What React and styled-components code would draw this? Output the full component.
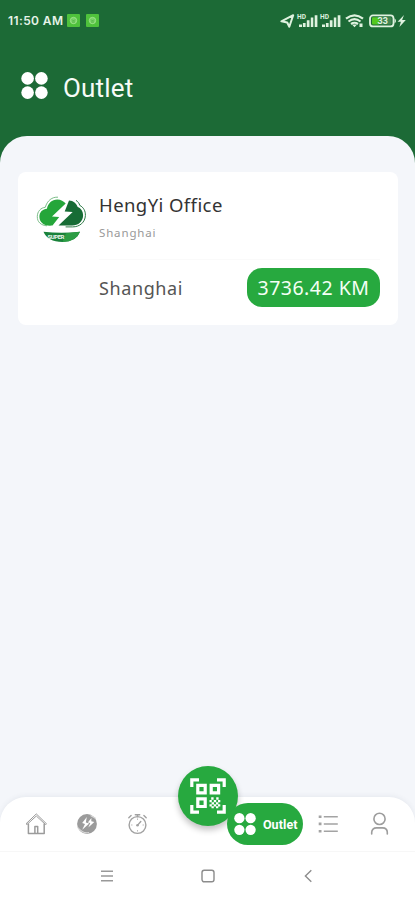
import React from 'react';
import styled, { createGlobalStyle } from 'styled-components';

const App = () => {
  return (
    <>
      <GlobalStyle />
      <Screen>
        <StatusBar>
          <Time>11:50 AM</Time>
          <AppBadge />
          <AppBadge />
          <StatusIcons />
        </StatusBar>

        <Header>
          <Dots size={27} />
          <Title>Outlet</Title>
        </Header>

        <Content>
          <Card>
            <Logo />
            <Details>
              <Name>HengYi Office</Name>
              <Area>Shanghai</Area>
              <Row>
                <City>Shanghai</City>
                <Distance>3736.42 KM</Distance>
              </Row>
            </Details>
          </Card>
        </Content>

        <TabBar>
          <Tab><HomeIcon /></Tab>
          <Tab><ChargeIcon /></Tab>
          <Tab><TimerIcon /></Tab>
          <ScanSlot>
            <ScanButton><QrIcon /></ScanButton>
          </ScanSlot>
          <ActiveTab>
            <Dots size={22} />
            <span>Outlet</span>
          </ActiveTab>
          <Tab><ListIcon /></Tab>
          <Tab><UserIcon /></Tab>
        </TabBar>

        <SystemNav>
          <svg width="14" height="14" viewBox="0 0 14 14" fill="none" stroke="#999" strokeWidth="1.4">
            <path d="M1 2.3h12M1 7h12M1 11.7h12" />
          </svg>
          <svg width="14" height="14" viewBox="0 0 14 14" fill="none" stroke="#8c8c8c" strokeWidth="1.4">
            <rect x="1" y="1.2" width="12" height="11.6" rx="2.2" />
          </svg>
          <svg width="14" height="14" viewBox="0 0 14 14" fill="none" stroke="#8c8c8c" strokeWidth="1.4">
            <path d="M10.3 1.3 4.4 7l5.9 5.7" />
          </svg>
        </SystemNav>
      </Screen>
    </>
  );
};

export default App;

const Dots = ({ size }) => (
  <svg width={size} height={size} viewBox="0 0 27 27" fill="#fff">
    <circle cx="6.6" cy="6.4" r="6.3" />
    <circle cx="20.4" cy="6.4" r="6.3" />
    <circle cx="6.6" cy="20.6" r="6.3" />
    <circle cx="20.4" cy="20.6" r="6.3" />
  </svg>
);

const AppBadge = () => (
  <Badge viewBox="0 0 13 13">
    <rect width="13" height="13" rx="1" fill="#4fc23c" />
    <circle cx="6.5" cy="6.5" r="3.2" fill="#7bd66a" stroke="#a4e592" strokeWidth="0.8" />
    <path d="M5 5.5 6.5 7 8 5.5M5 8h3" fill="none" stroke="#4cab40" strokeWidth="0.8" />
  </Badge>
);

const Signal = ({ x }) => (
  <g transform={`translate(${x} 0)`}>
    <text x="-1.5" y="5.2" fontSize="6.6" fontWeight="700">HD</text>
    <path d="M.5 10.4h3V13h-3zM4.4 8.9h2.7V13H4.4zM8.3 6.3H11V13H8.3zM12.3 3.6h2.5V13h-2.5zM16.2 1.2h2.7V13h-2.7z" />
  </g>
);

const StatusIcons = () => (
  <StatusSvg width="127" height="14" viewBox="0 0 127 14" fill="#dff2df">
    <path d="M1.4 7.3 13.2 1.2 9.3 12.7 7.2 8.5z" fill="none" stroke="#dff2df" strokeWidth="2" strokeLinejoin="round" />
    <Signal x={18.5} />
    <Signal x={41.5} />
    <g fill="none" stroke="#dff2df" strokeWidth="2.2">
      <path d="M66 4.6q8.5-6.6 17 0M68.5 7.5q6-4.6 12 0" />
      <path d="M71 10q3.5-2.5 7 0" />
    </g>
    <path d="m72 10.5 2.5 2.7 2.5-2.7zM79.5 9.5h3V13h-3z" />
    <rect x="90" y="1.4" width="23.5" height="11" rx="3" fill="none" stroke="#dff2df" strokeWidth="1.8" />
    <path d="M114.5 4.2q3 2.7 0 5.4z" />
    <rect x="92" y="3.3" width="7.5" height="7.2" rx="1" fill="#54c820" />
    <rect x="99.5" y="3.3" width="12" height="7.2" rx="1" fill="#438552" />
    <text x="97.5" y="10.2" fontSize="9" fontWeight="700">33</text>
    <path d="m124 1-6.4 6.8h3.3l-1.5 5.2 6.4-7h-3.7z" />
  </StatusSvg>
);

const Logo = () => (
  <LogoSvg width="52" height="49" viewBox="0 0 52 49">
    <path
      d="M11 30.8C5 30.4 1.2 27 1.3 21.7c0-5.4 3.6-9 8-9.4C11.2 5.6 16 1.8 22 2.2"
      fill="none" stroke="#6db57c" strokeWidth="0.9"
    />
    <path d="M16.5 30.5C8 31.5 3.4 27.4 3.4 21.8c0-4.8 3.4-7.6 7.5-8C12 8 16 4.4 21.2 4.4c3.6 0 6.6 1.6 8.5 4.2L16 21.6l7.2.4z" fill="#25a63a" />
    <path d="M33 5.4c4.4 0 7.5 3 8.7 6.5 3.4 1.4 5.5 4.6 5.4 8.6-.2 6-4.7 10-11 10H22.5l14.2-13.6-8-.5z" fill="#176c35" />
    <path d="M40 5.4c2 1.1 3.2 3 3.8 5 3.6 1.9 5.8 5.4 5.6 10.2-.4 6.7-5.6 11.3-12.8 11.3h-7" fill="none" stroke="#2e7b47" strokeWidth="1" />
    <path d="M7.5 36.8q18 2.1 36.5 0-3.5 10-17.5 10.2Q11.5 46.8 7.5 36.8z" fill="#19823a" />
    <path d="M30 38.3 44 36.8q-3.5 10-17.5 10.2z" fill="#2c9d44" />
    <text x="11.5" y="43.6" fontSize="6" fontWeight="800" textLength="17">SUPER</text>
  </LogoSvg>
);

const HomeIcon = () => (
  <svg width="24" height="24" viewBox="0 0 24 24" fill="none" stroke="#9b9b9b" strokeWidth="1.5" strokeLinejoin="round">
    <path d="M4.4 11.5v10h15.8v-10" />
    <path d="m2 11.8 10.3-9.9 10.2 9.9-1 .7-9.2-8.5L3 12.5z" strokeWidth="1" />
    <path d="M10.9 21.4v-6.8h2.8v6.8" />
  </svg>
);

const ChargeIcon = () => (
  <svg width="24" height="24" viewBox="0 0 24 24">
    <circle cx="12" cy="12" r="9.9" fill="#9b9b9b" />
    <path d="M11.8 5 7.2 11l2.8.9-2.8 5.9 7-6.4-3.4-.8z" fill="#fff" />
    <path d="m16.4 6-3.6 4.4 2.5.6-2 4.6 6-5.6-3-.8z" fill="#fff" />
    <path d="M2.8 15.5Q8 22 14 20.5M15.5 3.4l5.4 3.2" fill="none" stroke="#d8d8d8" strokeWidth="1.2" />
  </svg>
);

const TimerIcon = () => (
  <svg width="24" height="24" viewBox="0 0 24 24" fill="none" stroke="#a1a1a1" strokeWidth="1.4" strokeLinecap="round">
    <circle cx="12.5" cy="13" r="8.4" />
    <path d="M10.3 2.8h4.4M12.5 3v1.7M3.8 5.7l2.3-2.3M21.2 5.7l-2.3-2.3M12.6 13.1l3.2-3.6" />
    <circle cx="12.5" cy="13.3" r="1.3" fill="#a1a1a1" stroke="none" />
    <path d="M12.5 6.8v.8M6.3 13h.8M17.9 13h.8M12.5 18.4v.8" strokeWidth="0.7" />
  </svg>
);

const QrIcon = () => (
  <svg width="36" height="36" viewBox="0 0 36 36">
    <g fill="none" stroke="#fff" strokeWidth="3.2">
      <path d="M1.8 9V1.8H9M27 1.8h7.2V9M1.8 27v7.2H9M27 34.2h7.2V27" />
      <path d="M7.8 7.3h7.4v7.6H7.8zM21.2 7.3h7.4v7.6h-7.4zM7.8 20.9h7.4v7.6H7.8z" />
    </g>
    <path
      d="M21.2 19.3h2.4v2.4h-2.4zM26.2 19.3h2.4v2.4h-2.4zM19.5 22h2.3v2.3h-2.3zM23.8 22h2.4v2.3h-2.4zM28 22h2.3v2.3H28zM21.6 24.3h2.4v2.3h-2.4zM26 24.3h2.3v2.3H26zM19.5 26.3h2.3v2.3h-2.3zM23.8 26.3h2.4v2.3h-2.4zM28 26.3h2.3v2.3H28zM21.5 28.2h2.3v2h-2.3zM26 28.2h2.3v2H26z"
      fill="#fff"
    />
  </svg>
);

const ListIcon = () => (
  <svg width="24" height="24" viewBox="0 0 24 24" fill="none" stroke="#a3a3a3">
    <path d="M7.8 4.7H21.8M7.8 11.9H21.8M7.8 19.2H21.8" strokeWidth="1.5" />
    <path d="M2.7 4.7h2.8M2.7 11.9h2.8M2.7 19.2h2.8" strokeWidth="2.6" />
  </svg>
);

const UserIcon = () => (
  <svg width="24" height="24" viewBox="0 0 24 24" fill="none" stroke="#9d9d9d" strokeWidth="1.6" strokeLinecap="round">
    <circle cx="12.5" cy="6.9" r="5.6" />
    <path d="M4.7 22v-1.4c0-2.9 2-4.7 4.8-4.7h6c2.8 0 4.8 1.8 4.8 4.7V22" />
  </svg>
);

const GlobalStyle = createGlobalStyle`
  * {
    box-sizing: border-box;
  }
  body {
    margin: 0;
    font-family: 'Noto Sans', sans-serif;
  }
  svg {
    display: block;
    flex-shrink: 0;
  }
`;

const Screen = styled.div`
  width: 415px;
  height: 900px;
  display: flex;
  flex-direction: column;
  overflow: hidden;
  background: linear-gradient(#1c6a36 50%, #f4f6fa 50%);
`;

const StatusBar = styled.div`
  height: 41px;
  padding: 0 8px;
  display: flex;
  align-items: center;
`;

const Time = styled.span`
  width: 56px;
  margin-right: 3px;
  color: #e6f3e8;
  font-family: Inter, sans-serif;
  font-size: 12px;
  font-weight: 600;
  letter-spacing: 0.4px;
  white-space: nowrap;
`;

const Badge = styled.svg`
  width: 13px;
  height: 13px;
  margin-right: 6px;
`;

const StatusSvg = styled.svg`
  margin-left: auto;
  font-family: Roboto, sans-serif;
`;

const Header = styled.header`
  height: 95px;
  padding: 31px 0 0 21px;
  display: flex;
  align-items: flex-start;
  gap: 15px;
`;

const Title = styled.h1`
  margin: 0;
  color: #f7fbf7;
  font-family: Roboto, sans-serif;
  font-size: 26px;
  font-weight: 400;
  line-height: 32px;
  letter-spacing: 0.2px;
`;

const Content = styled.main`
  flex: 1;
  padding: 36px 17.5px 0;
  border-radius: 27px 27px 0 0;
  background: #f4f6fa;
`;

const Card = styled.section`
  height: 153px;
  padding: 23px 17.5px 0 18.5px;
  display: flex;
  gap: 11px;
  border-radius: 8px;
  background: #fff;
`;

const LogoSvg = styled.svg`
  font-family: Roboto, sans-serif;
  fill: #e8f4ea;
`;

const Details = styled.div`
  flex: 1;
  display: flex;
  flex-direction: column;
`;

const Name = styled.h2`
  margin: -1px 0 0;
  color: #333;
  font-size: 18.5px;
  font-weight: 400;
  line-height: 22px;
  letter-spacing: 0.42px;
`;

const Area = styled.p`
  height: 37px;
  margin: 7px 0 0;
  border-bottom: 1px solid #fafafa;
  color: #999;
  font-size: 11.5px;
  line-height: 19px;
  letter-spacing: 0.85px;
`;

const Row = styled.div`
  margin-top: 8px;
  display: flex;
  align-items: center;
  justify-content: space-between;
`;

const City = styled.span`
  color: #555;
  font-size: 18px;
  letter-spacing: 0.6px;
`;

const Distance = styled.span`
  width: 133px;
  height: 39px;
  display: flex;
  align-items: center;
  justify-content: center;
  border-radius: 15px;
  background: #27a93f;
  color: #f4fff4;
  font-size: 19.5px;
  letter-spacing: 0.5px;
`;

const TabBar = styled.nav`
  height: 54px;
  padding: 0 11px;
  display: flex;
  align-items: center;
  border-radius: 26px 26px 0 0;
  background: #fff;
  box-shadow: 0 -1px 5px rgba(70, 80, 100, 0.08);
`;

const Tab = styled.div`
  width: 50.6px;
  display: flex;
  justify-content: center;
`;

const ScanSlot = styled.div`
  position: relative;
  width: 64px;
  height: 54px;
`;

const ScanButton = styled.div`
  position: absolute;
  top: -31.5px;
  left: 15px;
  width: 60px;
  height: 60px;
  display: flex;
  align-items: center;
  justify-content: center;
  border-radius: 50%;
  background: #27a93f;
  box-shadow: 0 4px 6px rgba(0, 0, 0, 0.24);
`;

const ActiveTab = styled(Tab)`
  position: relative;
  width: 76px;
  height: 42px;
  padding-left: 2px;
  align-items: center;
  gap: 7px;
  border-radius: 21px;
  background: #27a93f;
  color: #fff;
  font-family: Roboto, sans-serif;
  font-size: 12.5px;
  font-weight: 700;
  letter-spacing: 0.1px;
`;

const SystemNav = styled.div`
  height: 49px;
  padding: 0 100px 1px;
  display: flex;
  align-items: center;
  justify-content: space-between;
  border-top: 1px solid #f7f7f7;
  background: #fff;
`;
